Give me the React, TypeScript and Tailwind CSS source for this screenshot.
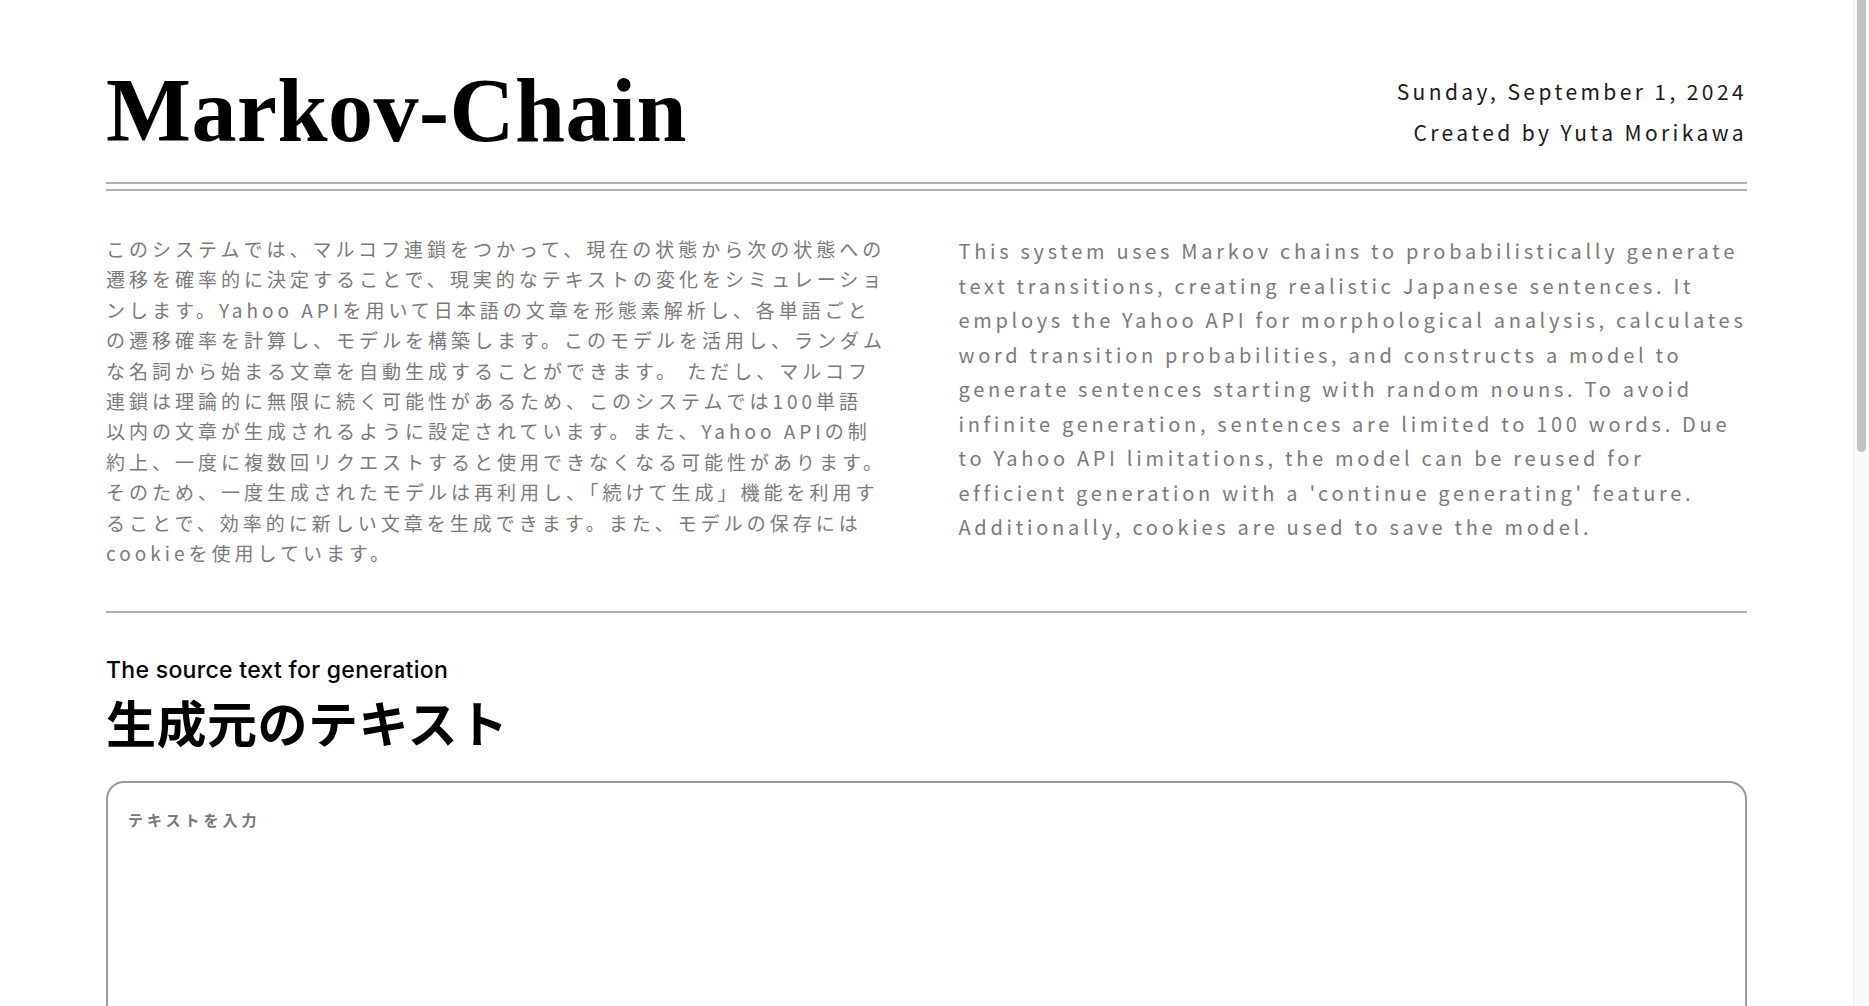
const jaLines = [
  "このシステムでは、マルコフ連鎖をつかって、現在の状態から次の状態への",
  "遷移を確率的に決定することで、現実的なテキストの変化をシミュレーショ",
  "ンします。Yahoo APIを用いて日本語の文章を形態素解析し、各単語ごと",
  "の遷移確率を計算し、モデルを構築します。このモデルを活用し、ランダム",
  "な名詞から始まる文章を自動生成することができます。 ただし、マルコフ",
  "連鎖は理論的に無限に続く可能性があるため、このシステムでは100単語",
  "以内の文章が生成されるように設定されています。また、Yahoo APIの制",
  "約上、一度に複数回リクエストすると使用できなくなる可能性があります。",
  "そのため、一度生成されたモデルは再利用し、「続けて生成」機能を利用す",
  "ることで、効率的に新しい文章を生成できます。また、モデルの保存には",
  "cookieを使用しています。",
];

const enLines = [
  "This system uses Markov chains to probabilistically generate",
  "text transitions, creating realistic Japanese sentences. It",
  "employs the Yahoo API for morphological analysis, calculates",
  "word transition probabilities, and constructs a model to",
  "generate sentences starting with random nouns. To avoid",
  "infinite generation, sentences are limited to 100 words. Due",
  "to Yahoo API limitations, the model can be reused for",
  "efficient generation with a 'continue generating' feature.",
  "Additionally, cookies are used to save the model.",
];

export default function App() {
  return (
    <div className="flex h-screen overflow-hidden bg-white">
      <main className="min-w-0 flex-1 overflow-hidden">
        <div className="min-h-[2240px] px-[106px] text-black font-['Noto_Sans_CJK_JP',sans-serif]">
          <header className="flex items-start justify-between pt-[66px]">
            <h1 className="font-['Liberation_Serif','Noto_Serif',serif] text-[90px] font-bold leading-none tracking-[0.5px] text-black">
              Markov-Chain
            </h1>
            <div className="mt-[5px] text-right text-[21px] leading-[41px] tracking-[3.4px] text-[#1a1a1a]">
              <p>Sunday, September 1, 2024</p>
              <p>Created by Yuta Morikawa</p>
            </div>
          </header>

          <div className="mt-[26px] flex flex-col gap-[5px]">
            <div className="h-[2px] bg-[#b0b0b0]" />
            <div className="h-[2px] bg-[#b0b0b0]" />
          </div>

          <section className="mt-[43px] grid grid-cols-2 gap-16">
            <p className="text-[19px] leading-[30.4px] tracking-[4px] text-[#7a7a7a]">
              {jaLines.map((l, i) => (
                <span key={i} className="block whitespace-nowrap">
                  {l}
                </span>
              ))}
            </p>
            <p className="text-[20px] leading-[34.5px] tracking-[3.7px] text-[#7a7a7a]">
              {enLines.map((l, i) => (
                <span key={i} className="block whitespace-nowrap">
                  {l}
                </span>
              ))}
            </p>
          </section>

          <div className="mt-[43px] h-[2px] bg-[#b0b0b0]" />

          <section className="mt-[45px]">
            <p className="font-['Inter',sans-serif] text-[23px] font-medium leading-[24px] tracking-[0.3px] text-black">
              The source text for generation
            </p>
            <h2 className="mt-[9px] text-[50px] font-bold leading-[60px] tracking-[0.5px] text-black">
              生成元のテキスト
            </h2>
            <textarea
              placeholder="テキストを入力"
              className="mt-[30px] block h-[520px] w-full resize-none rounded-[18px] border-2 border-[#9a9a9a] px-5 pt-[26px] text-[15px] font-bold tracking-[4px] text-[#555] outline-none placeholder:text-[#777]"
            />
          </section>
        </div>
      </main>

      <div className="flex w-[16px] shrink-0 border-l border-[#ebebeb] bg-[#fafafa] pl-[3px] pr-[3px]">
        <div className="h-[452px] w-full rounded-b-full bg-[#c2c2c2]" />
      </div>
    </div>
  );
}
